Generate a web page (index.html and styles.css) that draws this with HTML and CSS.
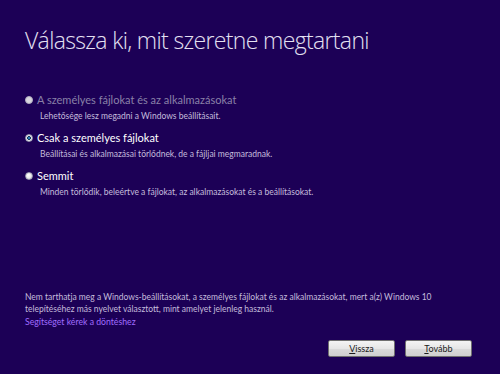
FILE: index.html
```html
<!DOCTYPE html>
<html lang="hu">
<head>
  <meta charset="UTF-8" />
  <title>Windows telepítő</title>
<link rel="stylesheet" href="styles.css">
</head>
<body>

  <div class="page">
    <h1 class="title">Válassza ki, mit szeretne megtartani</h1>

    <div class="options">
      <div class="option disabled">
        <div class="label"><span class="radio"></span>A személyes fájlokat és az alkalmazásokat</div>
        <div class="desc">Lehetősége lesz megadni a Windows beállításait.</div>
      </div>
      <div class="option">
        <div class="label"><span class="radio checked"></span>Csak a személyes fájlokat</div>
        <div class="desc">Beállításai és alkalmazásai törlődnek, de a fájljai megmaradnak.</div>
      </div>
      <div class="option">
        <div class="label"><span class="radio"></span>Semmit</div>
        <div class="desc">Minden törlődik, beleértve a fájlokat, az alkalmazásokat és a beállításokat.</div>
      </div>
    </div>

    <div class="footer">
      <p class="note">Nem tarthatja meg a Windows-beállításokat, a személyes fájlokat és az alkalmazásokat, mert a(z) Windows 10 telepítéséhez más nyelvet választott, mint amelyet jelenleg használ.</p>
      <a class="help" href="#">Segítséget kérek a döntéshez</a>
      <div class="buttons">
        <button class="btn"><u>V</u>issza</button>
        <button class="btn"><u>T</u>ovább</button>
      </div>
    </div>
  </div>

</body>
</html>
```

FILE: styles.css
```css
body {
  margin: 0;
  padding: 0;
  background-color: #1c0056;
  font-family: Lato, "Open Sans", sans-serif;
  color: #ffffff;
}

.page {
  height: 374px;
  box-sizing: border-box;
  padding: 24px 28px 17px 25px;
  display: flex;
  flex-direction: column;
}

.title {
  margin: 0;
  font-family: "Open Sans", sans-serif;
  font-size: 23px;
  font-weight: 300;
  color: #e4e0f2;
  line-height: 32px;
  letter-spacing: -0.65px;
}

.options {
  margin-top: 36px;
}

.option {
  margin-bottom: 8px;
}

.label {
  display: flex;
  align-items: center;
  font-size: 11px;
  line-height: 16px;
  color: #ffffff;
}

.option.disabled .label {
  color: #8a80a8;
}

.radio {
  flex: none;
  width: 8px;
  height: 8px;
  border-radius: 50%;
  background: radial-gradient(circle at 40% 35%, #ffffff 0%, #e8e8ec 55%, #c4c4cc 100%);
  margin-right: 4px;
  box-sizing: border-box;
  border: 1px solid #9a9ab0;
}

.option.disabled .radio {
  background: #d8d6de;
  border-color: #b0acc0;
}

.radio.checked {
  background: radial-gradient(circle, #3a9ad8 0%, #1f6fa8 25%, #1a3a5a 38%, #f0f0f4 52%, #d8d8e0 100%);
}

.desc {
  font-size: 8.5px;
  line-height: 12px;
  color: #c4bcdc;
  margin-top: 2px;
  padding-left: 15px;
}

.footer {
  margin-top: auto;
}

.note {
  margin: 0;
  font-size: 8.5px;
  line-height: 12px;
  color: #c4bcdc;
  max-width: 425px;
}

.help {
  display: block;
  margin-top: 1px;
  font-size: 8.7px;
  line-height: 12px;
  color: #a06cff;
  text-decoration: none;
}

.buttons {
  display: flex;
  justify-content: flex-end;
  gap: 10px;
  margin-top: 12px;
}

.btn {
  width: 67px;
  height: 17px;
  padding: 0;
  font-family: Lato, "Open Sans", sans-serif;
  font-size: 9px;
  color: #1a1a1a;
  border: 1px solid #707070;
  border-radius: 2px;
  background: linear-gradient(#f4f4f4, #e6e6e6 50%, #dadada 51%, #cfcfcf);
  cursor: pointer;
}
```
